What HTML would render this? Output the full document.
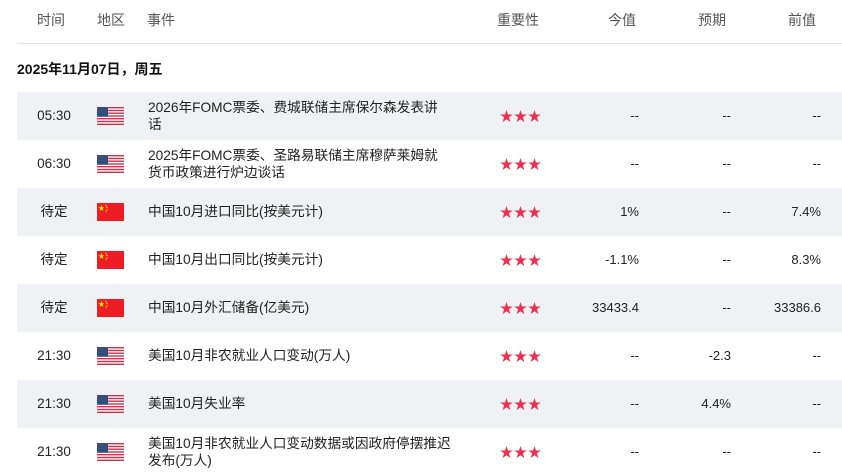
<!DOCTYPE html>
<html><head><meta charset="utf-8"><style>
body{margin:0;width:842px;height:473px;overflow:hidden;background:#fff;font-family:"Liberation Sans","Noto Sans CJK SC",sans-serif;font-size:13px;line-height:17px;color:#222;}
.hdr{position:absolute;top:0;left:17px;width:825px;height:43px;border-bottom:1px solid #e3e3e3;}
.hdr span{position:absolute;top:11px;font-size:14px;line-height:18px;color:#555;}
.date{position:absolute;top:60px;left:17px;font-weight:bold;font-size:14px;line-height:18px;color:#111;}
.row{position:absolute;left:17px;width:825px;height:48px;}
.g{background:#f0f1f4;}
.row .t{position:absolute;left:0;width:74px;text-align:center;top:15px;font-size:13.5px;}
.row .f{position:absolute;left:80px;top:15px;width:27px;height:18px;}
.row .e{position:absolute;left:131px;width:330px;line-height:17px;font-size:13.7px;}
.row .s{position:absolute;left:483px;top:18px;width:44px;height:13px;}
.row .a{position:absolute;right:203px;top:15px;text-align:right;}
.row .b{position:absolute;right:111px;top:15px;text-align:right;}
.row .c{position:absolute;right:21px;top:15px;text-align:right;}
</style></head><body>
<div class="hdr">
<span style="left:20px">时间</span><span style="left:80px">地区</span><span style="left:130px">事件</span>
<span style="left:480px">重要性</span><span style="left:591px">今值</span><span style="left:681px">预期</span><span style="left:771px">前值</span>
</div>
<div class="date">2025年11月07日，周五</div>

<svg width="0" height="0" style="position:absolute"><defs>
<g id="us"><rect width="27" height="18" fill="#fff"/><g fill="#c8334a"><rect y="0" width="27" height="1.4"/><rect y="2.8" width="27" height="1.4"/><rect y="5.5" width="27" height="1.4"/><rect y="8.3" width="27" height="1.4"/><rect y="11" width="27" height="1.4"/><rect y="13.8" width="27" height="1.4"/><rect y="16.6" width="27" height="1.4"/></g><rect width="11" height="9.7" fill="#3c4a7c"/></g>
<g id="cn"><rect width="27" height="18" fill="#ee1c25"/><polygon points="4.5,2 5.3,4.3 7.6,4.3 5.8,5.7 6.4,8 4.5,6.6 2.6,8 3.2,5.7 1.4,4.3 3.7,4.3" fill="#ffde00"/><circle cx="9" cy="2.5" r=".7" fill="#ffde00"/><circle cx="10" cy="4.5" r=".7" fill="#ffde00"/><circle cx="10" cy="6.8" r=".7" fill="#ffde00"/><circle cx="9" cy="8.5" r=".7" fill="#ffde00"/></g>
<polygon id="st" points="6.5,0 8,4.5 12.8,4.5 8.9,7.3 10.4,12 6.5,9.2 2.6,12 4.1,7.3 0.2,4.5 5,4.5" fill="#f0304e"/>
<g id="s3"><use href="#st"/><use href="#st" x="14"/><use href="#st" x="28"/></g>
</defs></svg>

<div class="row g" style="top:92px"><div class="t">05:30</div><svg class="f"><use href="#us"/></svg><div class="e" style="top:7px">2026年FOMC票委、费城联储主席保尔森发表讲<br>话</div><svg class="s"><use href="#s3"/></svg><div class="a">--</div><div class="b">--</div><div class="c">--</div></div>
<div class="row" style="top:140px"><div class="t">06:30</div><svg class="f"><use href="#us"/></svg><div class="e" style="top:7px">2025年FOMC票委、圣路易联储主席穆萨莱姆就<br>货币政策进行炉边谈话</div><svg class="s"><use href="#s3"/></svg><div class="a">--</div><div class="b">--</div><div class="c">--</div></div>
<div class="row g" style="top:188px"><div class="t">待定</div><svg class="f"><use href="#cn"/></svg><div class="e" style="top:15px">中国10月进口同比(按美元计)</div><svg class="s"><use href="#s3"/></svg><div class="a">1%</div><div class="b">--</div><div class="c">7.4%</div></div>
<div class="row" style="top:236px"><div class="t">待定</div><svg class="f"><use href="#cn"/></svg><div class="e" style="top:15px">中国10月出口同比(按美元计)</div><svg class="s"><use href="#s3"/></svg><div class="a">-1.1%</div><div class="b">--</div><div class="c">8.3%</div></div>
<div class="row g" style="top:284px"><div class="t">待定</div><svg class="f"><use href="#cn"/></svg><div class="e" style="top:15px">中国10月外汇储备(亿美元)</div><svg class="s"><use href="#s3"/></svg><div class="a">33433.4</div><div class="b">--</div><div class="c">33386.6</div></div>
<div class="row" style="top:332px"><div class="t">21:30</div><svg class="f"><use href="#us"/></svg><div class="e" style="top:15px">美国10月非农就业人口变动(万人)</div><svg class="s"><use href="#s3"/></svg><div class="a">--</div><div class="b">-2.3</div><div class="c">--</div></div>
<div class="row g" style="top:380px"><div class="t">21:30</div><svg class="f"><use href="#us"/></svg><div class="e" style="top:15px">美国10月失业率</div><svg class="s"><use href="#s3"/></svg><div class="a">--</div><div class="b">4.4%</div><div class="c">--</div></div>
<div class="row" style="top:428px"><div class="t">21:30</div><svg class="f"><use href="#us"/></svg><div class="e" style="top:7px">美国10月非农就业人口变动数据或因政府停摆推迟<br>发布(万人)</div><svg class="s"><use href="#s3"/></svg><div class="a">--</div><div class="b">--</div><div class="c">--</div></div>
</body></html>
